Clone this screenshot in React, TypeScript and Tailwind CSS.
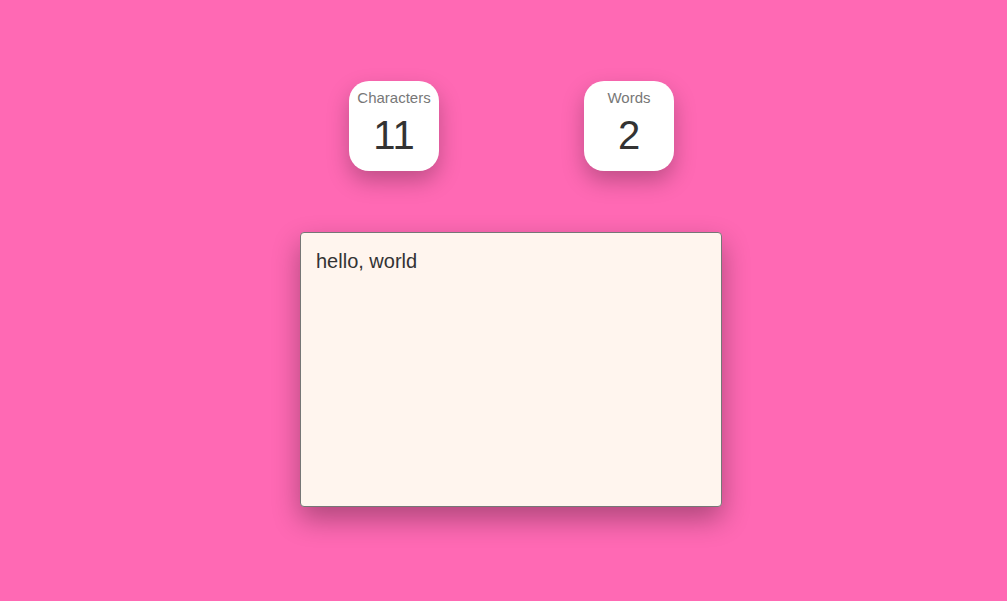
import React, { useState } from "react";

function Card({ label, value }: { label: string; value: number }) {
  return (
    <div className="w-[90px] h-[90px] bg-white rounded-[20px] shadow-[0_10px_22px_rgba(0,0,0,0.25)] flex flex-col items-center">
      <div className="mt-[8px] text-[15px] leading-[18px] text-[#777]">{label}</div>
      <div className="mt-[5px] text-[40px] leading-[46px] text-[#333]">{value}</div>
    </div>
  );
}

export default function App() {
  const [text, setText] = useState("hello, world");
  const words = text.trim() ? text.trim().split(/\s+/).length : 0;
  const chars = text.replace(/\s/g, "").length;
  return (
    <div
      className="w-full h-[601px] bg-[#ff69b4] flex justify-center pl-[15px]"
      style={{ fontFamily: '"Liberation Sans", Arial, sans-serif' }}
    >
      <div className="w-[422px] pt-[81px] flex flex-col">
        <div className="flex justify-between pl-[49px] pr-[48px]">
          <Card label="Characters" value={chars} />
          <Card label="Words" value={words} />
        </div>
        <textarea
          value={text}
          onChange={(e) => setText(e.target.value)}
          className="mt-[61px] w-[422px] h-[275px] bg-[#fff5ee] border border-[#767676] rounded-[4px] px-[15px] pt-[14px] pb-[15px] text-[20px] leading-[28px] text-[#333] resize-none outline-none shadow-[0_12px_28px_rgba(0,0,0,0.32)]"
          style={{ fontFamily: '"Liberation Sans", Arial, sans-serif' }}
        />
      </div>
    </div>
  );
}
